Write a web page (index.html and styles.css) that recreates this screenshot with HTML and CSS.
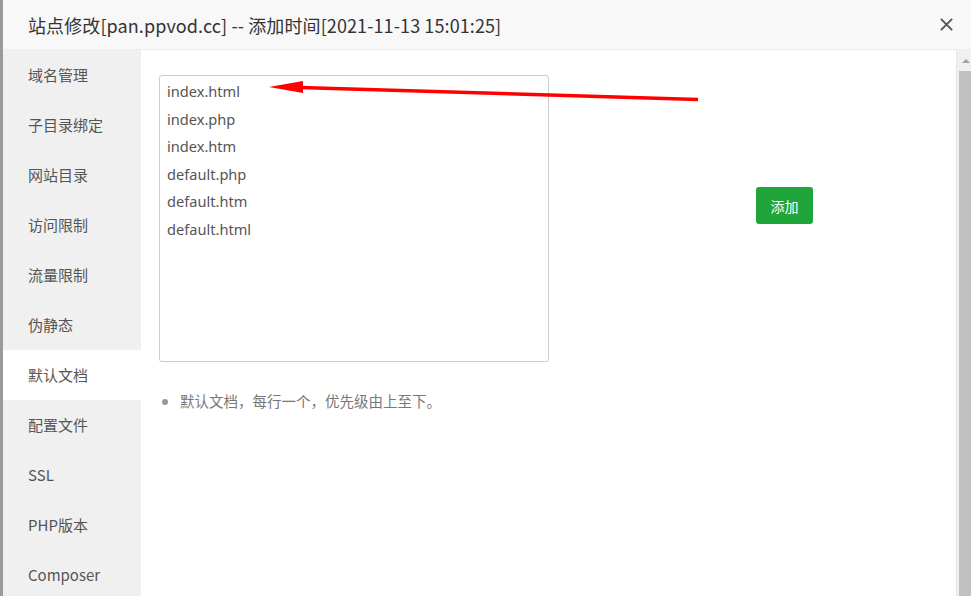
FILE: index.html
```html
<!DOCTYPE html>
<html lang="zh-CN">
<head>
<meta charset="utf-8">
<title>站点修改</title>
<link rel="stylesheet" href="styles.css">
</head>
<body>
<div class="dialog">
  <div class="titlebar">
    <span class="title">站点修改[pan.ppvod.cc] -- 添加时间[2021-11-13 15:01:25]</span>
    <svg class="close" width="16" height="16" viewBox="0 0 16 16"><path d="M2 2 L14 14 M14 2 L2 14" stroke="#555" stroke-width="2" fill="none"/></svg>
  </div>
  <div class="main">
    <ul class="side">
      <li>域名管理</li>
      <li>子目录绑定</li>
      <li>网站目录</li>
      <li>访问限制</li>
      <li>流量限制</li>
      <li>伪静态</li>
      <li class="active">默认文档</li>
      <li>配置文件</li>
      <li>SSL</li>
      <li>PHP版本</li>
      <li>Composer</li>
    </ul>
    <div class="content">
      <div class="row">
        <div class="docs">index.html
index.php
index.htm
default.php
default.htm
default.html</div>
        <button class="btn">添加</button>
      </div>
      <ul class="tips">
        <li>默认文档，每行一个，优先级由上至下。</li>
      </ul>
    </div>
    <div class="scrollbar">
      <span class="up"></span>
      <span class="thumb"></span>
    </div>
  </div>
</div>
<svg class="annot" width="971" height="596" viewBox="0 0 971 596">
  <polygon points="269,87 303,81 303,93" fill="#ff0000"/>
  <line x1="300" y1="87.5" x2="698" y2="99.5" stroke="#ff0000" stroke-width="3.5"/>
</svg>
</body>
</html>
```

FILE: styles.css
```css
html, body {
  margin: 0;
  padding: 0;
  height: 100%;
  overflow: hidden;
}
body {
  background: #9a9a9a;
  font-family: "Noto Sans", "Noto Sans CJK SC", sans-serif;
  position: relative;
}
.dialog {
  margin-left: 3px;
  height: 596px;
  display: flex;
  flex-direction: column;
  background: #fff;
}
.titlebar {
  height: 49px;
  border-bottom: 1px solid #eee;
  background: #f8f8f8;
  display: flex;
  align-items: center;
  justify-content: space-between;
  padding: 0 17px 0 25px;
  flex-shrink: 0;
}
.title {
  font-size: 18px;
  color: #333;
  font-family: "Noto Sans CJK SC", sans-serif;
  letter-spacing: 0.1px;
  white-space: nowrap;
}
.close {
  width: 15px;
  height: 15px;
}
.main {
  flex: 1;
  display: flex;
  min-height: 0;
}
.side {
  list-style: none;
  margin: 0;
  padding: 0;
  width: 138px;
  background: #f0f0f0;
  flex-shrink: 0;
}
.side li {
  height: 50px;
  line-height: 50px;
  padding-left: 25px;
  font-size: 15px;
  color: #555;
  font-family: "Noto Sans CJK SC", sans-serif;
}
.side li.active {
  background: #fff;
}
.content {
  flex: 1;
  padding: 25px 18px 0 18px;
}
.row {
  display: flex;
  align-items: flex-start;
}
.docs {
  box-sizing: border-box;
  width: 390px;
  height: 287px;
  border: 1px solid #ccc;
  border-radius: 3px;
  padding: 2px 7px;
  white-space: pre;
  font-size: 14.6px;
  line-height: 27.5px;
  color: #555;
  font-family: "Noto Sans", sans-serif;
}
.btn {
  margin-left: 207px;
  margin-top: 112px;
  width: 57px;
  height: 37px;
  border: none;
  border-radius: 3px;
  background: #20a53a;
  color: #fff;
  font-size: 14px;
  font-family: "Noto Sans CJK SC", sans-serif;
  padding: 0;
}
.tips {
  margin: 29px 0 0 0;
  padding-left: 21px;
  color: #777;
  font-size: 14.5px;
  line-height: 20px;
  font-family: "Noto Sans CJK SC", sans-serif;
}
.tips li::marker {
  color: #999;
}
.scrollbar {
  width: 14px;
  background: #f0f0f0;
  border-left: 1px solid #e6e6e6;
  display: flex;
  flex-direction: column;
  align-items: flex-end;
  flex-shrink: 0;
}
.up {
  width: 0;
  height: 0;
  margin: 9px 1px 0 0;
  border-left: 4px solid transparent;
  border-right: 4px solid transparent;
  border-bottom: 4px solid #a3a3a3;
}
.thumb {
  margin-top: 8px;
  width: 12px;
  flex: 1;
  background: #c1c1c1;
}
.annot {
  position: absolute;
  left: 0;
  top: 0;
  pointer-events: none;
}
```
